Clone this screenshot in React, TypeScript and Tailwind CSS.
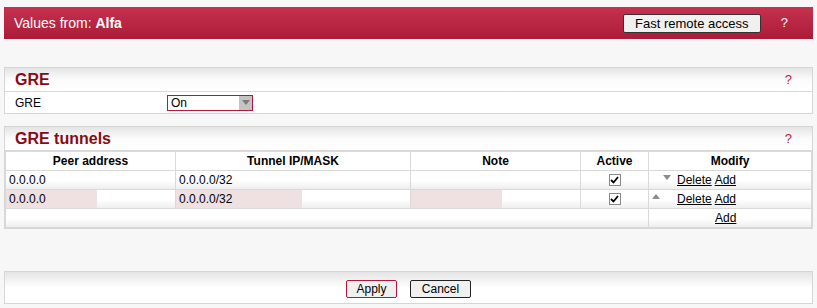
import React from "react";

const font = { fontFamily: '"Liberation Sans", Arial, sans-serif' };

function PanelHeader({ title }: { title: string }) {
  return (
    <div className="h-[24px] flex items-center justify-between pl-[10px] pr-[20px] bg-gradient-to-b from-[#e4e4e4] via-[#fbfbfb] to-white border-b border-[#d9d9d9]">
      <span className="text-[16px] font-bold text-[#880a16] leading-none">{title}</span>
      <span className="text-[13px] text-[#c0203a] leading-none">?</span>
    </div>
  );
}

function Check() {
  return (
    <span className="flex w-[12px] h-[12px] border border-[#8a8a8a] bg-white items-center justify-center">
      <svg width="9" height="8" viewBox="0 0 9 8">
        <path d="M1 4 L3.5 6.5 L8 1" stroke="#000" strokeWidth="1.8" fill="none" />
      </svg>
    </span>
  );
}

function Tri({ up }: { up?: boolean }) {
  return (
    <svg width="8" height="5" viewBox="0 0 8 5" className="block">
      {up ? <path d="M0 5 L4 0 L8 5Z" fill="#8c8c8c" /> : <path d="M0 0 L8 0 L4 5Z" fill="#8c8c8c" />}
    </svg>
  );
}

const rowBg = "bg-gradient-to-b from-white via-white to-[#ececec]";
const td = "border border-[#d9d9d9] p-0 text-[12px] text-black align-middle";
const inner = "h-[18px] flex items-center px-[3px] leading-none";

function Pink({ w, children }: { w: number; children?: React.ReactNode }) {
  return (
    <div className="h-[18px] flex items-center">
      <div style={{ width: w }} className="h-[18px] bg-[#efe1e1] pl-[3px] flex items-center leading-none">{children}</div>
    </div>
  );
}

export default function App() {
  return (
    <div style={font} className="w-[817px] h-[308px] bg-[#f7f7f7] pt-[7px] px-[4px] overflow-hidden">
      <div className="h-[32px] flex items-center justify-between pl-[10px] bg-gradient-to-b from-[#c6314f] to-[#ab1b37] text-white">
        <span className="text-[14px]">
          Values from: <b>Alfa</b>
        </span>
        <div className="flex items-center">
          <button className="w-[138px] h-[19px] bg-[#f0f0f0] border border-[#333] rounded-[2px] text-[13px] text-black leading-none">
            Fast remote access
          </button>
          <span className="ml-[20px] mr-[25px] text-[13px]">?</span>
        </div>
      </div>

      <div className="mt-[28px] border border-[#d6d6d6] bg-white">
        <PanelHeader title="GRE" />
        <div className="h-[21px] flex items-center pl-[10px]">
          <span className="w-[152px] text-[12px]">GRE</span>
          <div className="w-[86px] h-[16px] border border-[#b3173a] flex items-center justify-between bg-white">
            <span className="pl-[3px] text-[12px] leading-none">On</span>
            <span className="w-[13px] h-[14px] bg-[#c4c4c4] flex items-center justify-center">
              <svg width="8" height="5" viewBox="0 0 8 5"><path d="M0 0 L8 0 L4 5Z" fill="#7a7a7a" /></svg>
            </span>
          </div>
        </div>
      </div>

      <div className="mt-[12px] border border-[#d6d6d6] bg-white">
        <PanelHeader title="GRE tunnels" />
        <table className="w-full border-collapse">
          <colgroup>
            <col style={{ width: 170 }} />
            <col style={{ width: 235 }} />
            <col style={{ width: 170 }} />
            <col style={{ width: 68 }} />
            <col />
          </colgroup>
          <tbody>
            <tr className="bg-white">
              {["Peer address", "Tunnel IP/MASK", "Note", "Active", "Modify"].map((h) => (
                <th key={h} className={td + " font-bold"}>
                  <div className={inner + " justify-center"}>{h}</div>
                </th>
              ))}
            </tr>
            <tr className={rowBg}>
              <td className={td}><div className={inner}>0.0.0.0</div></td>
              <td className={td}><div className={inner}>0.0.0.0/32</div></td>
              <td className={td}><div className={inner}></div></td>
              <td className={td}><div className={inner + " justify-center"}><Check /></div></td>
              <td className={td}>
                <div className={inner + " pl-[14px]"}>
                  <span className="mb-[5px]"><Tri /></span>
                  <a className="underline ml-[6px]">Delete</a>
                  <a className="underline ml-[3px]">Add</a>
                </div>
              </td>
            </tr>
            <tr className={rowBg}>
              <td className={td}><Pink w={91}>0.0.0.0</Pink></td>
              <td className={td}><Pink w={126}>0.0.0.0/32</Pink></td>
              <td className={td}><Pink w={91} /></td>
              <td className={td}><div className={inner + " justify-center"}><Check /></div></td>
              <td className={td}>
                <div className={inner}>
                  <span className="mb-[5px]"><Tri up /></span>
                  <a className="underline ml-[17px]">Delete</a>
                  <a className="underline ml-[3px]">Add</a>
                </div>
              </td>
            </tr>
            <tr className={rowBg}>
              <td className={td} colSpan={4}><div className={inner}></div></td>
              <td className={td}>
                <div className={inner + " pl-[66px]"}>
                  <a className="underline">Add</a>
                </div>
              </td>
            </tr>
          </tbody>
        </table>
      </div>

      <div className="mt-[42px] border border-[#d6d6d6] bg-gradient-to-b from-[#e4e4e4] via-white to-white h-[33px] flex items-center justify-center pt-[3px]">
        <button className="w-[51px] h-[18px] bg-[#f0f0f0] border border-[#b3173a] rounded-[2px] text-[12px] text-black leading-none">Apply</button>
        <button className="ml-[13px] w-[61px] h-[18px] bg-[#f0f0f0] border border-[#222] rounded-[2px] text-[12px] text-black leading-none">Cancel</button>
      </div>
    </div>
  );
}
